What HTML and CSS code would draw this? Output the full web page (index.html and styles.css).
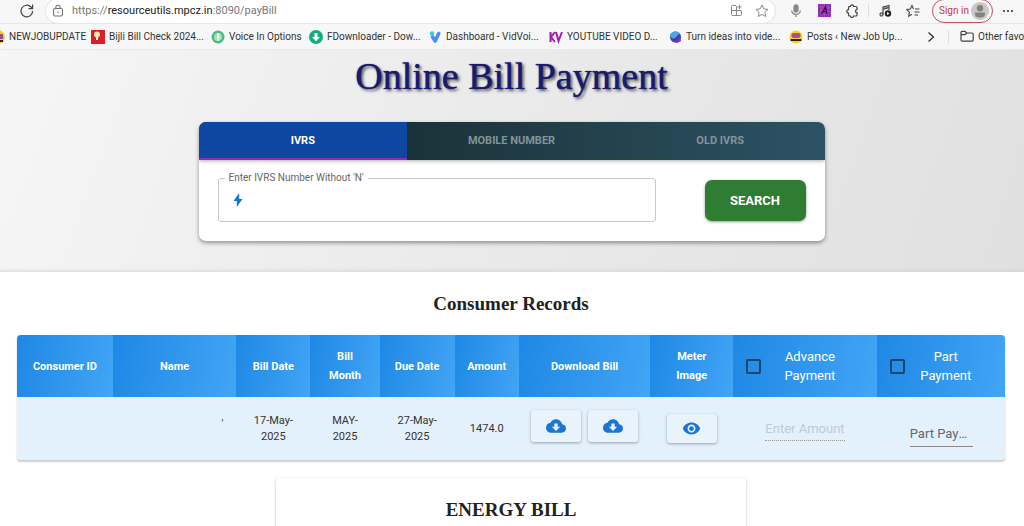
FILE: index.html
```html
<!DOCTYPE html>
<html lang="en">
<head>
<meta charset="utf-8">
<title>Online Bill Payment</title>
<link rel="stylesheet" href="styles.css">
</head>
<body>
<svg class="defs" aria-hidden="true">
  <symbol id="cloud" viewBox="0 0 24 24"><path fill="currentColor" d="M19.35 10.04C18.67 6.59 15.64 4 12 4 9.11 4 6.6 5.64 5.35 8.04 2.34 8.36 0 10.91 0 14c0 3.31 2.69 6 6 6h13c2.76 0 5-2.24 5-5 0-2.64-2.05-4.78-4.65-4.96zM17 13l-5 5-5-5h3V9h4v4h3z"/></symbol>
</svg>
<header class="browser">
  <div class="toolbar">
    <button class="icon-btn reload" aria-label="Reload"><svg width="16" height="16" viewBox="0 0 16 16" fill="none" stroke="#444" stroke-width="1.2"><path d="M13.6 8A5.8 5.8 0 1 1 12 4l1.6 1.4M13.6 1.6v4h-4"/></svg></button>
    <div class="address">
      <svg width="12" height="14" viewBox="0 0 12 14" fill="none" stroke="#777" stroke-width="1.1"><rect x="1.5" y="4.5" width="9" height="7.5" rx="1.5"/><path d="M3.8 4.500V3.500a2.200 2.200 0 0 1 4.400 0v1"/><circle cx="6" cy="8.200" r=".8" fill="#777" stroke="none"/></svg>
      <span class="url">https://<span class="host">resourceutils.mpcz.in</span>:8090/payBill</span>
      <button class="icon-btn" aria-label="Apps"><svg width="13" height="13" viewBox="0 0 13 13" fill="none" stroke="#888"><path d="M6 1.500H2.500a1 1 0 0 0-1 1v8a1 1 0 0 0 1 1h8a1 1 0 0 0 1-1V7M1.500 6.500h10M6.500 2v9.500M9.500 1v4M7.500 3h4"/></svg></button>
      <button class="icon-btn" aria-label="Add favourite"><svg width="14" height="14" viewBox="0 0 14 14" fill="none" stroke="#888"><path d="m7 1 1.800 3.900 4.200.5-3.100 2.900.8 4.200L7 10.400l-3.700 2.100.8-4.200L1 5.400l4.200-.5z"/></svg></button>
    </div>
    <div class="tools">
      <button class="icon-btn" aria-label="Voice"><svg width="12" height="14" viewBox="0 0 12 14" fill="none" stroke="#888" stroke-width="1.300"><rect x="4" y="1" width="4" height="7" rx="2" fill="#888"/><path d="M1.700 6.500a4.300 4 0 0 0 8.600 0M6 10.500V13"/></svg></button>
      <button class="icon-btn" aria-label="Font extension"><svg width="13" height="13" viewBox="0 0 13 13"><path fill="#a63cc9" d="M0 0h13v13H0z"/><path d="M1 1h11v11H1z" fill="none" stroke="#55256b" stroke-dasharray="1 1"/><path d="m3.500 10 4-7 1.500 7M5 7.700h3.500" fill="none" stroke="#2c1238" stroke-width="1.300"/></svg></button>
      <button class="icon-btn" aria-label="Extensions"><svg width="14" height="14" viewBox="0 0 14 14" fill="none" stroke="#444" stroke-width="1.200"><path d="M4.500 2.500h1a1.600 1.600 0 0 1 3.200 0H11a1 1 0 0 1 1 1v2.200a1.500 1.500 0 0 0 0 3V11a1 1 0 0 1-1 1H8.500a1.500 1.500 0 0 1-3 0h-1a1 1 0 0 1-1-1V9a1.700 1.700 0 0 1 0-3.400V3.500a1 1 0 0 1 1-1z"/></svg></button>
      <i class="rule"></i>
      <button class="icon-btn" aria-label="Media"><svg width="13" height="14" viewBox="0 0 13 14" fill="none" stroke="#555" stroke-width="1.300"><circle cx="2.500" cy="10.500" r="1.500"/><path d="M4 10.500V3l6-1.500V6M4 5l6-1.500"/><circle cx="9" cy="9.500" r="3.200" fill="#222" stroke="none"/><path d="m8 8 2.500 1.500L8 11z" fill="#fff" stroke="none"/></svg></button>
      <button class="icon-btn" aria-label="Favourites"><svg width="14" height="14" viewBox="0 0 14 14" fill="none" stroke="#444" stroke-width="1.100"><path d="M7.500 5 6 1.500 4.400 5 .7 5.500l2.700 2.700-.7 4 3.300-2M9 5h4.500M8.500 8h5M8.500 11h3.500"/></svg></button>
      <button class="signin">Sign in <svg width="18" height="18" viewBox="0 0 18 18"><circle cx="9" cy="9" r="9" fill="#c9c7c5"/><circle cx="9" cy="6.300" r="3.200" fill="#85817e"/><path d="M4 10.500h10v1.500q0 3.500-5 3.500t-5-3.500z" fill="#85817e"/></svg></button>
      <button class="icon-btn" aria-label="More"><svg width="12" height="4" viewBox="0 0 12 4" fill="#333"><circle cx="2" cy="2" r="1.100"/><circle cx="6" cy="2" r="1.100"/><circle cx="10" cy="2" r="1.100"/></svg></button>
    </div>
  </div>
  <nav class="bookmarks" aria-label="Bookmarks">
    <a href="#" class="bm first"><svg width="14" height="14" viewBox="0 0 14 14"><circle cx="7" cy="7" r="7" fill="#f1cf2a"/><path d="M2 4h10v5H2z" fill="#a04b89"/><path d="M2 10h10v2H2z" fill="#222"/></svg>NEWJOBUPDATE</a>
    <a href="#" class="bm"><svg width="14" height="14" viewBox="0 0 14 14"><path fill="#dc1f26" d="M0 0h14v14H0z"/><circle cx="6" cy="4.500" r="3" fill="#ffe9a8"/><path d="M5 7h2v3H5z" fill="#fff"/></svg>Bijli Bill Check 2024...</a>
    <a href="#" class="bm short"><svg width="14" height="14" viewBox="0 0 14 14"><circle cx="7" cy="7" r="6.500" fill="#4cb98d"/><circle cx="7" cy="7" r="4" fill="#a7dfab"/><rect x="6" y="3" width="2.500" height="6" rx="1" fill="#eafbe2"/><path d="M7 9v2" stroke="#fff"/></svg>Voice In Options</a>
    <a href="#" class="bm"><svg width="14" height="14" viewBox="0 0 14 14"><circle cx="7" cy="7" r="7" fill="#16ad78"/><path fill="#fff" d="M5.500 3h3v4H11l-4 4.200L3 7h2.500z"/></svg>FDownloader - Dow...</a>
    <a href="#" class="bm"><svg width="13" height="14" viewBox="0 0 13 14"><circle cx="3" cy="3.500" r="2.200" fill="#2fd0e5"/><path d="m3.500 7 2.700 4 3.500-7.500" fill="none" stroke="#4b8df5" stroke-width="3.600" stroke-linecap="round" stroke-linejoin="round"/></svg>Dashboard - VidVoi...</a>
    <a href="#" class="bm"><svg width="14" height="14" viewBox="0 0 14 14" fill="none" stroke="#a21caf" stroke-width="2"><path d="M1.500 2v10M6 2 2 7l4 5M7 2l2.500 9L13 2"/></svg>YOUTUBE VIDEO D...</a>
    <a href="#" class="bm"><svg width="13" height="14" viewBox="0 0 13 14"><circle cx="6.500" cy="7" r="5.500" fill="#3f3eb5"/><path d="M1 6q3 5 7 0 1-2 3-2-3-4-7-2Q1 3 1 6z" fill="#4aa8dc"/><path d="M3 10q5 2 8-3l1 4-4 2z" fill="#7733bd"/></svg>Turn ideas into vide...</a>
    <a href="#" class="bm"><svg width="14" height="14" viewBox="0 0 14 14"><circle cx="7" cy="7" r="6.500" fill="#f1d51e"/><rect x="2.500" y="3" width="9" height="5" rx="2" fill="#b04b91"/><path d="M1.500 9h11v2h-11z" fill="#282030"/></svg>Posts ‹ New Job Up...</a>
    <button class="icon-btn more" aria-label="More bookmarks"><svg width="8" height="12" viewBox="0 0 8 12" fill="none" stroke="#333" stroke-width="1.300"><path d="m1.500 1.500 5 4.500-5 4.500"/></svg></button>
    <i class="rule"></i>
    <a href="#" class="bm other"><svg width="14" height="13" viewBox="0 0 14 13" fill="none" stroke="#444" stroke-width="1.200"><path d="M1 10V2.500A1.200 1.200 0 0 1 2.200 1.300H5L6.700 3H12a1.200 1.200 0 0 1 1.200 1.200V10a1.200 1.200 0 0 1-1.200 1.200H2.200A1.200 1.200 0 0 1 1 10zM1 4.700h4L6.700 3"/></svg>Other favorites</a>
  </nav>
</header>
<section class="hero">
  <h1>Online Bill Payment</h1>
  <div class="search-card">
    <div class="tabs" role="tablist">
      <button class="tab active" role="tab" aria-selected="true">IVRS</button>
      <button class="tab" role="tab">MOBILE NUMBER</button>
      <button class="tab" role="tab">OLD IVRS</button>
    </div>
    <form class="search-form">
      <div class="field">
        <label for="ivrs">Enter IVRS Number Without 'N'</label>
        <svg width="12" height="16" viewBox="0 0 12 16" fill="#1976d2"><path d="M7.200 1 1.500 9h3.300v6L10.500 7H7.200z"/></svg>
        <input id="ivrs" type="text">
      </div>
      <button class="search-btn" type="button">SEARCH</button>
    </form>
  </div>
</section>
<main class="records">
  <h2>Consumer Records</h2>
  <table>
    <colgroup><col class="c-id"><col class="c-name"><col class="c-bill"><col class="c-month"><col class="c-due"><col class="c-amount"><col class="c-download"><col class="c-meter"><col class="c-advance"><col class="c-part"></colgroup>
    <thead>
      <tr>
        <th>Consumer ID</th><th>Name</th><th>Bill Date</th><th>Bill<br>Month</th><th>Due Date</th><th>Amount</th><th>Download Bill</th><th>Meter<br>Image</th>
        <th><label class="check"><input type="checkbox"><span>Advance Payment</span></label></th>
        <th><label class="check"><input type="checkbox"><span>Part Payment</span></label></th>
      </tr>
    </thead>
    <tbody>
      <tr>
        <td></td><td class="name">'</td><td>17-May-<br>2025</td><td>MAY-<br>2025</td><td>27-May-<br>2025</td><td>1474.0</td>
        <td><div class="actions">
          <button class="action" aria-label="Download bill"><svg width="20" height="20"><use href="#cloud"/></svg></button>
          <button class="action" aria-label="Download bill copy"><svg width="20" height="20"><use href="#cloud"/></svg></button>
        </div></td>
        <td><button class="action eye" aria-label="View meter image"><svg width="19" height="19" viewBox="0 0 24 24" fill="currentColor"><path d="M12 4.500C7 4.500 2.730 7.610 1 12c1.730 4.390 6 7.500 11 7.500s9.270-3.110 11-7.500c-1.730-4.390-6-7.500-11-7.500zM12 17c-2.760 0-5-2.240-5-5s2.240-5 5-5 5 2.240 5 5-2.240 5-5 5zm0-8c-1.660 0-3 1.340-3 3s1.340 3 3 3 3-1.340 3-3-1.340-3-3-3z"/></svg></button></td>
        <td><input class="amount" type="text" placeholder="Enter Amount" aria-label="Advance amount" disabled></td>
        <td class="part-cell"><select class="part" aria-label="Part payment"><option>Part Payment</option></select></td>
      </tr>
    </tbody>
  </table>
  <section class="bill"><h2>ENERGY BILL</h2></section>
</main>
</body>
</html>
```

FILE: styles.css
```css
* { box-sizing: border-box; }
body { margin: 0; background: #fff; color: #222; font-family: Roboto, "Liberation Sans", sans-serif; overflow: hidden; }
button { border: 0; padding: 0; background: none; font: inherit; }
.defs { display: none; }
svg { flex: none; display: block; }

.browser { background: #f7f7f7; border-bottom: 1px solid #e9e9e9; }
.toolbar { display: flex; align-items: center; height: 23px; padding: 0 0 2px 18px; overflow: hidden; }
.icon-btn { display: flex; align-items: center; justify-content: center; width: 18px; flex: none; }
.address { flex: 1; display: flex; align-items: center; gap: 8px; height: 26px; margin-left: 9px; padding: 0 4px 0 6px; background: #fff; border: 1px solid #e4e4e4; border-radius: 13px; }
.url { flex: 1; font-size: 11px; color: #777; }
.host { color: #222; }
.tools { display: flex; align-items: center; gap: 10px; width: 248px; padding-left: 11px; }
.tools .rule { margin: 0 -3px; }
.rule { flex: none; width: 1px; height: 13px; background: #ddd; }
.signin { display: flex; align-items: center; justify-content: space-between; width: 61px; height: 24px; flex: none; padding: 0 3px 0 6px; border: 1px solid #c4515a; border-radius: 12px; color: #c23944; font-size: 10px; white-space: nowrap; }
.signin + .icon-btn { margin-left: -4px; }
.bookmarks { display: flex; align-items: center; height: 26px; margin-left: -9px; border-top: 1px solid #e6e6e6; overflow: hidden; }
.bm { display: flex; align-items: center; gap: 4px; flex: none; width: 120px; color: #333; font-size: 10px; text-decoration: none; white-space: nowrap; }
.bm.first { width: 100px; }
.bm.short { width: 98px; }
.more { margin-left: 13px; }
.bookmarks .rule { margin: 0 11px 0 8px; }

.hero { padding: 6px 17px 31px 16px; background: linear-gradient(110deg, #f6f6f6, #ececec 40%, #e0e0e0); box-shadow: inset 0 -4px 5px -4px #ccc; }
h1 { margin: 0; text-align: center; font: 38px/40px "Liberation Serif", serif; color: #1a1a6e; text-shadow: 0 0 1px #1a1a6e, 2px 2px 3px #555; }
.search-card { max-width: 626px; margin: 26px auto 0; background: #fff; border-radius: 7px; box-shadow: 0 2px 4px #0006; overflow: hidden; }
.tabs { display: flex; background: linear-gradient(90deg, #0f2027, #203a43 50%, #2c5364); box-shadow: 0 1px 4px #0005; }
.tab { flex: 1; height: 38px; font-size: 11px; font-weight: 700; color: #82949b; border-bottom: 2px solid transparent; }
.tab.active { background: #0d47a1; color: #fff; border-bottom-color: #9c27b0; }
.search-form { display: flex; align-items: center; justify-content: space-between; gap: 49px; padding: 18px 19px 19px; }
.field { position: relative; flex: 1; display: flex; align-items: center; height: 44px; padding: 0 13px; border: 1px solid #c8c8c8; border-radius: 3px; }
.field label { position: absolute; top: -8px; left: 6px; padding: 0 4px; background: #fff; font-size: 10px; line-height: 14px; color: #666; }
.field input { flex: 1; height: 24px; border: 0; outline: 0; font: inherit; background: none; }
.search-btn { width: 101px; height: 41px; border-radius: 7px; background: #2e7d32; color: #fff; font-size: 13px; font-weight: 700; box-shadow: 0 1px 3px #0006; }

.records { padding: 20px 19px 0 17px; }
h2 { margin: 0; text-align: center; font: bold 19px/24px "Liberation Serif", serif; color: #222; }
table { width: 100%; margin-top: 19px; table-layout: fixed; border-spacing: 0; border-radius: 4px; overflow: hidden; box-shadow: 0 2px 2px #0003; background: #e3f1fd; }
.c-id { width: 9.7%; } .c-name { width: 12.5%; } .c-bill { width: 7.5%; } .c-month { width: 7%; } .c-due { width: 7.6%; }
.c-amount { width: 6.5%; } .c-download { width: 13.3%; } .c-meter { width: 8.4%; } .c-advance { width: 14.6%; } .c-part { width: 12.9%; }
th { height: 62px; padding: 0; background: linear-gradient(100deg, #1e88e5, #42a5f5); color: #fff; font-size: 11px; font-weight: 700; line-height: 19px; }
td { height: 63px; padding: 0; text-align: center; font-size: 11px; line-height: 16px; color: #333; }
.name { padding-right: 13px; padding-bottom: 10px; text-align: right; }
.check { display: flex; align-items: center; padding: 0 19px 0 13px; font-size: 13px; font-weight: 400; }
.check span { flex: 1; padding: 0 10px; }
.check input { appearance: none; flex: none; width: 15px; height: 15px; margin: 0; border: 2px solid #17466f; border-radius: 2px; }
.actions { display: flex; justify-content: center; gap: 7px; padding-bottom: 6px; }
.action { display: inline-flex; align-items: center; justify-content: center; width: 50px; height: 32px; border-radius: 3px; color: #1976d2; background: #e8f3fc; box-shadow: 0 1px 3px #0005; }
.action.eye { height: 29px; vertical-align: middle; }
.amount, .part { padding: 0; border: 0; border-radius: 0; background: none; font: 13px/24px Roboto, sans-serif; }
.amount { width: 80px; height: 25px; border-bottom: 1px dotted #999; vertical-align: middle; }
.amount::placeholder { color: #bccbd6; }
.part { appearance: none; width: 63px; height: 25px; border-bottom: 1px solid #888; color: #666; text-overflow: ellipsis; white-space: nowrap; overflow: hidden; vertical-align: middle; }
.part-cell { padding-top: 12px; }
.bill { max-width: 470px; margin: 18px auto 0; padding: 20px 0 24px; border-radius: 3px; box-shadow: 0 1px 3px #0004; }
```
